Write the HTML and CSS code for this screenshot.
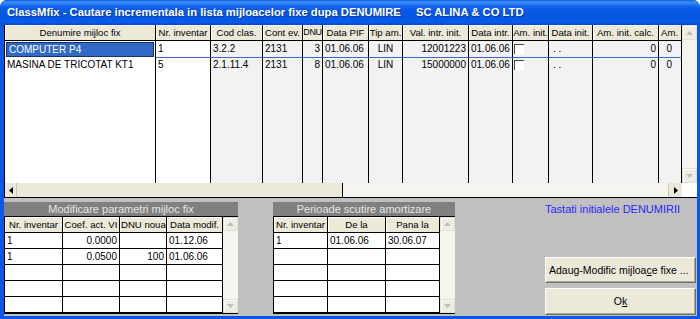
FILE: index.html
```html
<!DOCTYPE html>
<html>
<head>
<meta charset="utf-8">
<link rel="stylesheet" href="styles.css">
</head>
<body>
<div class="window">
  <div class="titlebar"><span>ClassMfix - Cautare incrementala in lista mijloacelor fixe dupa DENUMIRE</span><span class="company">SC ALINA &amp; CO LTD</span></div>
  <div class="frame">
    <div class="maingrid">
      <div class="gridview">
        <div class="mg">
          <div class="h">Denumire mijloc fix</div>
          <div class="h">Nr. inventar</div>
          <div class="h">Cod clas.</div>
          <div class="h">Cont ev.</div>
          <div class="h tight">DNU</div>
          <div class="h">Data PIF</div>
          <div class="h">Tip am.</div>
          <div class="h">Val. intr. init.</div>
          <div class="h">Data intr.</div>
          <div class="h">Am. init.</div>
          <div class="h">Data init.</div>
          <div class="h">Am. init. calc.</div>
          <div class="h hl">Am. i</div>

          <div class="c w"><span class="sel">COMPUTER P4</span></div>
          <div class="c w">1</div>
          <div class="c">3.2.2</div>
          <div class="c">2131</div>
          <div class="c r">3</div>
          <div class="c">01.06.06</div>
          <div class="c m">LIN</div>
          <div class="c r">12001223</div>
          <div class="c">01.06.06</div>
          <div class="c"><span class="chk"></span></div>
          <div class="c dots">. .</div>
          <div class="c r">0</div>
          <div class="c r last">0</div>

          <div class="c w">MASINA DE TRICOTAT KT1</div>
          <div class="c w">5</div>
          <div class="c">2.1.11.4</div>
          <div class="c">2131</div>
          <div class="c r">8</div>
          <div class="c">01.06.06</div>
          <div class="c m">LIN</div>
          <div class="c r">15000000</div>
          <div class="c">01.06.06</div>
          <div class="c"><span class="chk"></span></div>
          <div class="c dots">. .</div>
          <div class="c r">0</div>
          <div class="c r last">0</div>

          <div class="c w"></div>
          <div class="c w"></div>
          <div class="c"></div>
          <div class="c"></div>
          <div class="c"></div>
          <div class="c"></div>
          <div class="c"></div>
          <div class="c"></div>
          <div class="c"></div>
          <div class="c"></div>
          <div class="c"></div>
          <div class="c"></div>
          <div class="c"></div>
        </div>
        <div class="rowline"></div>
      </div>
      <div class="vscroll">
        <div class="sbtn"><svg width="7" height="4" viewBox="0 0 7 4"><path d="M3.5 0 L7 4 L0 4 Z" fill="#c3c1b5"/></svg></div>
        <div class="strack"></div>
        <div class="sbtn"><svg width="7" height="4" viewBox="0 0 7 4"><path d="M0 0 L7 0 L3.5 4 Z" fill="#c3c1b5"/></svg></div>
      </div>
      <div class="hscroll">
        <div class="hbtn"><svg width="4" height="7" viewBox="0 0 4 7"><path d="M0 3.5 L4 0 L4 7 Z" fill="#000"/></svg></div>
        <div class="hthumb"></div>
        <div class="htrack"></div>
        <div class="hbtn"><svg width="4" height="7" viewBox="0 0 4 7"><path d="M0 0 L4 3.5 L0 7 Z" fill="#000"/></svg></div>
      </div>
      <div class="corner"></div>
    </div>

    <div class="bottom">
      <div class="panel p1">
        <div class="ptitle">Modificare parametri mijloc fix</div>
        <div class="subgrid sg1">
          <div class="sgcells">
            <div class="h">Nr. inventar</div>
            <div class="h">Coef. act. VI</div>
            <div class="h">DNU noua</div>
            <div class="h">Data modif.</div>

            <div class="c">1</div>
            <div class="c r">0.0000</div>
            <div class="c"></div>
            <div class="c">01.12.06</div>

            <div class="c">1</div>
            <div class="c r">0.0500</div>
            <div class="c r">100</div>
            <div class="c">01.06.06</div>

            <div class="c"></div><div class="c"></div><div class="c"></div><div class="c"></div>
            <div class="c"></div><div class="c"></div><div class="c"></div><div class="c"></div>
            <div class="c"></div><div class="c"></div><div class="c"></div><div class="c"></div>
          </div>
          <div class="vscroll small">
            <div class="sbtn"><svg width="7" height="4" viewBox="0 0 7 4"><path d="M3.5 0 L7 4 L0 4 Z" fill="#c3c1b5"/></svg></div>
            <div class="strack"></div>
            <div class="sbtn"><svg width="7" height="4" viewBox="0 0 7 4"><path d="M0 0 L7 0 L3.5 4 Z" fill="#c3c1b5"/></svg></div>
          </div>
        </div>
      </div>

      <div class="panel p2">
        <div class="ptitle">Perioade scutire amortizare</div>
        <div class="subgrid sg2">
          <div class="sgcells">
            <div class="h">Nr. inventar</div>
            <div class="h">De la</div>
            <div class="h">Pana la</div>

            <div class="c">1</div>
            <div class="c">01.06.06</div>
            <div class="c">30.06.07</div>

            <div class="c"></div><div class="c"></div><div class="c"></div>
            <div class="c"></div><div class="c"></div><div class="c"></div>
            <div class="c"></div><div class="c"></div><div class="c"></div>
            <div class="c"></div><div class="c"></div><div class="c"></div>
          </div>
          <div class="vscroll small">
            <div class="sbtn"><svg width="7" height="4" viewBox="0 0 7 4"><path d="M3.5 0 L7 4 L0 4 Z" fill="#c3c1b5"/></svg></div>
            <div class="strack"></div>
            <div class="sbtn"><svg width="7" height="4" viewBox="0 0 7 4"><path d="M0 0 L7 0 L3.5 4 Z" fill="#c3c1b5"/></svg></div>
          </div>
        </div>
      </div>

      <div class="side">
        <div class="hint">Tastati initialele DENUMIRII</div>
        <div class="btns">
          <div class="btn left">Adaug-Modific mijloa<u>c</u>e fixe ...</div>
          <div class="btn ok">O<u>k</u></div>
        </div>
      </div>
    </div>
  </div>
</div>
</body>
</html>
```

FILE: styles.css
```css
* { box-sizing: border-box; }
html, body { margin: 0; padding: 0; background: #fff; }
body {
  width: 700px;
  height: 319px;
  overflow: hidden;
  font-family: "Liberation Sans", Arial, sans-serif;
  font-size: 10px;
  color: #000;
}

.window {
  width: 700px;
  height: 319px;
  display: flex;
  flex-direction: column;
  border-radius: 7px 7px 0 0;
  overflow: hidden;
  background: #0a56e4;
}

.titlebar {
  height: 25px;
  flex: none;
  background: linear-gradient(180deg, #0a5bdd 0px, #3d8ef8 2px, #2c7cf2 4px, #0c60e8 7px, #0558e5 12px, #0556e2 18px, #0a5cea 22px, #0449cd 25px);
  color: #fff;
  font: bold 11.25px "Liberation Sans", Arial, sans-serif;
  line-height: 13px;
  padding: 6px 0 0 7px;
  white-space: nowrap;
  text-shadow: 1px 1px 0 #0b3aa0;
}
.titlebar .company { margin-left: 15px; }

.frame {
  flex: 1;
  min-height: 0;
  display: flex;
  flex-direction: column;
  border-left: 4px solid #0b57e6;
  border-right: 3px solid #0b57e6;
  border-bottom: 3px solid #0b57e6;
  background: #c0c0c0;
}

/* main grid */
.maingrid {
  flex: none;
  height: 173px;
  display: grid;
  grid-template-columns: 1fr 15px;
  grid-template-rows: 158px 14px;
  border-left: 1px solid #000;
  border-bottom: 1px solid #000;
  background: #f2f2f2;
}
.gridview { position: relative; overflow: hidden; }
.mg {
  display: grid;
  grid-template-columns: 151px 55px 52px 40px 20px 46px 34px 66px 44px 36px 44px 66px 23px;
  grid-template-rows: 16px 16px 16px 110px;
  height: 158px;
}
.mg .h, .sgcells .h {
  background: #ece9d8;
  border-right: 1px solid #000;
  border-bottom: 1px solid #000;
  box-shadow: inset 1px 1px 0 #fff;
  text-align: center;
  font-size: 9.6px;
  line-height: 15px;
  white-space: nowrap;
  overflow: hidden;
}
.mg .h.tight { font-size: 9px; letter-spacing: -0.4px; padding: 0; }
.mg .hl { text-align: left; padding-left: 2px; }
.mg .c {
  background: #f2f2f2;
  border-right: 1px solid #000;
  line-height: 16px;
  padding: 0 2px;
  white-space: nowrap;
  overflow: hidden;
}
.mg .c.w { background: #fff; }
.c.r { text-align: right; }
.c.m { text-align: center; }
.mg .c.last { padding-right: 9px; }
.mg .c.dots { padding-left: 4px; }
.sel {
  display: block;
  margin: 1px -1px 0 -1px;
  height: 15px;
  line-height: 13px;
  padding-left: 2px;
  background: #3169c6;
  color: #fff;
  border: 1px solid #1b2f6b;
}
.chk {
  display: block;
  width: 10px;
  height: 10px;
  margin: 3px 0 0 -1px;
  background: #fff;
  border-top: 1px solid #4a4a4a;
  border-left: 1px solid #4a4a4a;
}
.rowline {
  position: absolute;
  left: 151px;
  top: 32px;
  width: 526px;
  height: 1px;
  background: #3d6cc4;
}

/* scrollbars */
.vscroll {
  display: flex;
  flex-direction: column;
  background: #f5f4ee;
}
.sbtn {
  flex: none;
  height: 15px;
  display: flex;
  align-items: center;
  justify-content: center;
  background: #eeede5;
  border: 1px solid #e2e0d4;
  box-shadow: inset 1px 1px 0 #fbfbf8;
}
.strack { flex: 1; }
.hscroll {
  display: flex;
  background: #f5f4ee;
}
.hbtn {
  flex: none;
  width: 12px;
  display: flex;
  align-items: center;
  justify-content: center;
  background: #ece9d8;
  border-right: 1px solid #c9c6b6;
}
.hbtn:last-child { width: 14px; border-right: none; border-left: 1px solid #c9c6b6; }
.hthumb {
  width: 326px;
  background: #ece9d8;
  border-right: 1px solid #000;
}
.htrack { flex: 1; }
.corner { background: #fff; }

/* bottom */
.bottom {
  flex: 1;
  display: flex;
  padding-top: 4px;
}
.panel { flex: none; display: flex; flex-direction: column; }
.p1 { width: 234px; }
.p2 { width: 182px; margin-left: 35px; }
.ptitle {
  height: 14px;
  background: #808080;
  color: #e6e6e6;
  font-size: 11px;
  line-height: 14px;
  text-align: center;
  white-space: nowrap;
}
.subgrid {
  display: flex;
  height: 98px;
  border: 1px solid #000;
  border-right: none;
  background: #fff;
}
.sgcells {
  flex: 1;
  display: grid;
  grid-auto-rows: 16px;
}
.sg1 .sgcells { grid-template-columns: 58px 57px 47px 56px; }
.sg2 .sgcells { grid-template-columns: 54px 58px 54px; }
.sgcells .h { padding: 0 1px; }
.sgcells .c {
  border-right: 1px solid #000;
  border-bottom: 1px solid #000;
  line-height: 15px;
  padding: 0 2px;
  white-space: nowrap;
  overflow: hidden;
  background: #fff;
}
.vscroll.small { width: 15px; flex: none; }
.vscroll.small .sbtn { height: 14px; }

.side {
  flex: none;
  width: 151px;
  margin-left: auto;
  margin-right: 1px;
  display: flex;
  flex-direction: column;
}
.hint {
  color: #2828ff;
  font-size: 11px;
  line-height: 13px;
  margin-top: 1px;
  white-space: nowrap;
}
.btns {
  margin-top: auto;
  display: flex;
  flex-direction: column;
  gap: 5px;
  margin-bottom: 1px;
}
.btn {
  height: 26px;
  background: #ece9d8;
  border-top: 1px solid #fff;
  border-left: 1px solid #fff;
  border-right: 1px solid #716f64;
  border-bottom: 1px solid #716f64;
  box-shadow: inset -1px -1px 0 #aca899;
  font-size: 10.5px;
  line-height: 24px;
  white-space: nowrap;
}
.btn.left { padding-left: 3px; }
.btn.ok { text-align: center; height: 27px; line-height: 25px; }
.btn u { text-decoration: underline; }
```
